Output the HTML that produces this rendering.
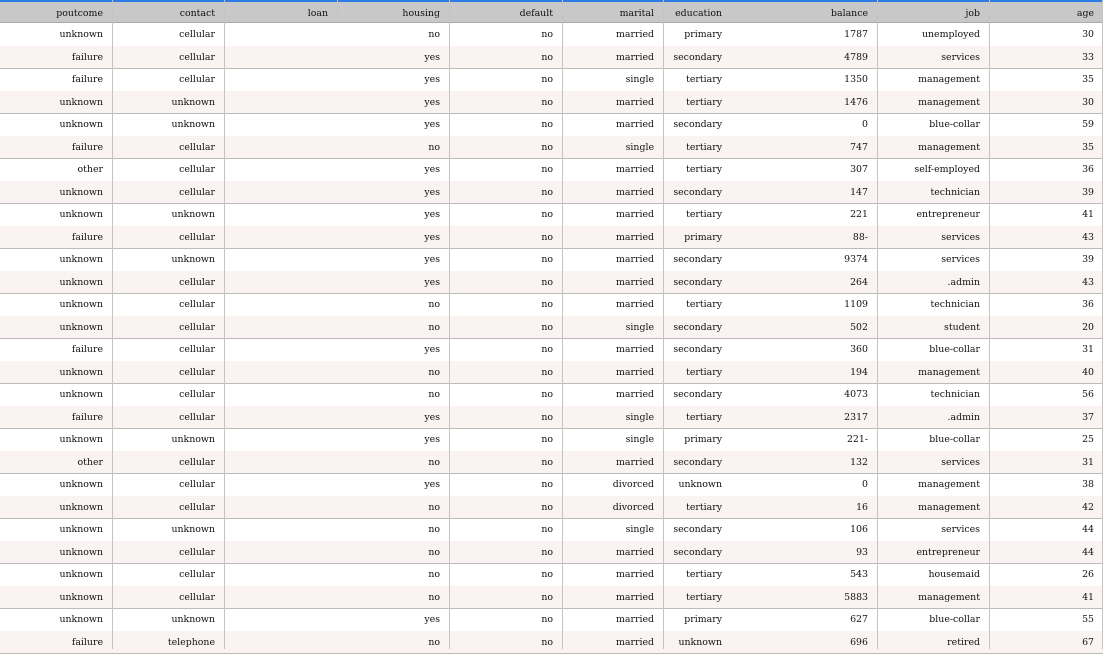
<!DOCTYPE html><html><head><style>
body{margin:0;width:1103px;height:649px;overflow:hidden;background:#fff;font-family:"DejaVu Serif","Liberation Serif",serif;font-size:9.4px;color:#111}
.r{position:absolute;left:0;width:1103px;height:22.5px;line-height:23.5px}
.c{position:absolute;top:0;height:100%;text-align:right;box-sizing:border-box;padding-right:9px;white-space:nowrap}
.h{background:#c8c8c8;top:0;height:23px;line-height:23px;border-top:2px solid #2a7be4;box-sizing:border-box;border-bottom:1px solid #aaa}
.alt{background:#fbf3f1}
.b{border-bottom:1px solid #bbb}
.vl{position:absolute;top:0;width:1px;height:649px;background:#c4c4c4}
</style></head><body>
<div class="r h">
<div class="c" style="left:0;width:112px">poutcome</div>
<div class="c" style="left:112px;width:112px">contact</div>
<div class="c" style="left:224px;width:113px">loan</div>
<div class="c" style="left:337px;width:112px">housing</div>
<div class="c" style="left:449px;width:113px">default</div>
<div class="c" style="left:562px;width:101px">marital</div>
<div class="c" style="left:663px;width:68px">education</div>
<div class="c" style="left:731px;width:146px">balance</div>
<div class="c" style="left:877px;width:112px">job</div>
<div class="c" style="left:989px;width:114px">age</div>
</div>
<div class="vl" style="left:337px;height:22px"></div>
<div id="t"></div>
<script>
var d=`unknown,cellular,no,no,married,primary,1787,unemployed,30
failure,cellular,yes,no,married,secondary,4789,services,33
failure,cellular,yes,no,single,tertiary,1350,management,35
unknown,unknown,yes,no,married,tertiary,1476,management,30
unknown,unknown,yes,no,married,secondary,0,blue-collar,59
failure,cellular,no,no,single,tertiary,747,management,35
other,cellular,yes,no,married,tertiary,307,self-employed,36
unknown,cellular,yes,no,married,secondary,147,technician,39
unknown,unknown,yes,no,married,tertiary,221,entrepreneur,41
failure,cellular,yes,no,married,primary,88-,services,43
unknown,unknown,yes,no,married,secondary,9374,services,39
unknown,cellular,yes,no,married,secondary,264,.admin,43
unknown,cellular,no,no,married,tertiary,1109,technician,36
unknown,cellular,no,no,single,secondary,502,student,20
failure,cellular,yes,no,married,secondary,360,blue-collar,31
unknown,cellular,no,no,married,tertiary,194,management,40
unknown,cellular,no,no,married,secondary,4073,technician,56
failure,cellular,yes,no,single,tertiary,2317,.admin,37
unknown,unknown,yes,no,single,primary,221-,blue-collar,25
other,cellular,no,no,married,secondary,132,services,31
unknown,cellular,yes,no,divorced,unknown,0,management,38
unknown,cellular,no,no,divorced,tertiary,16,management,42
unknown,unknown,no,no,single,secondary,106,services,44
unknown,cellular,no,no,married,secondary,93,entrepreneur,44
unknown,cellular,no,no,married,tertiary,543,housemaid,26
unknown,cellular,no,no,married,tertiary,5883,management,41
unknown,unknown,yes,no,married,primary,627,blue-collar,55
failure,telephone,no,no,married,unknown,696,retired,67`.split("\n");
var cols=[[0,112],[112,112],[224,225],[449,113],[562,101],[663,68],[731,146],[877,112],[989,114]];
var h="";
d.forEach(function(l,i){var v=l.split(",");var cls="r"+(i%2?" alt b":"");
h+='<div class="'+cls+'" style="top:'+(23+i*22.5)+'px">';
v.forEach(function(x,j){h+='<div class="c" style="left:'+cols[j][0]+'px;width:'+cols[j][1]+'px">'+x+'</div>';});
h+='</div>';});
[112,224,449,562,663,877,989,1102].forEach(function(x){h+='<div class="vl" style="left:'+x+'px"></div>';});
document.getElementById("t").innerHTML=h;
</script>
</body></html>
